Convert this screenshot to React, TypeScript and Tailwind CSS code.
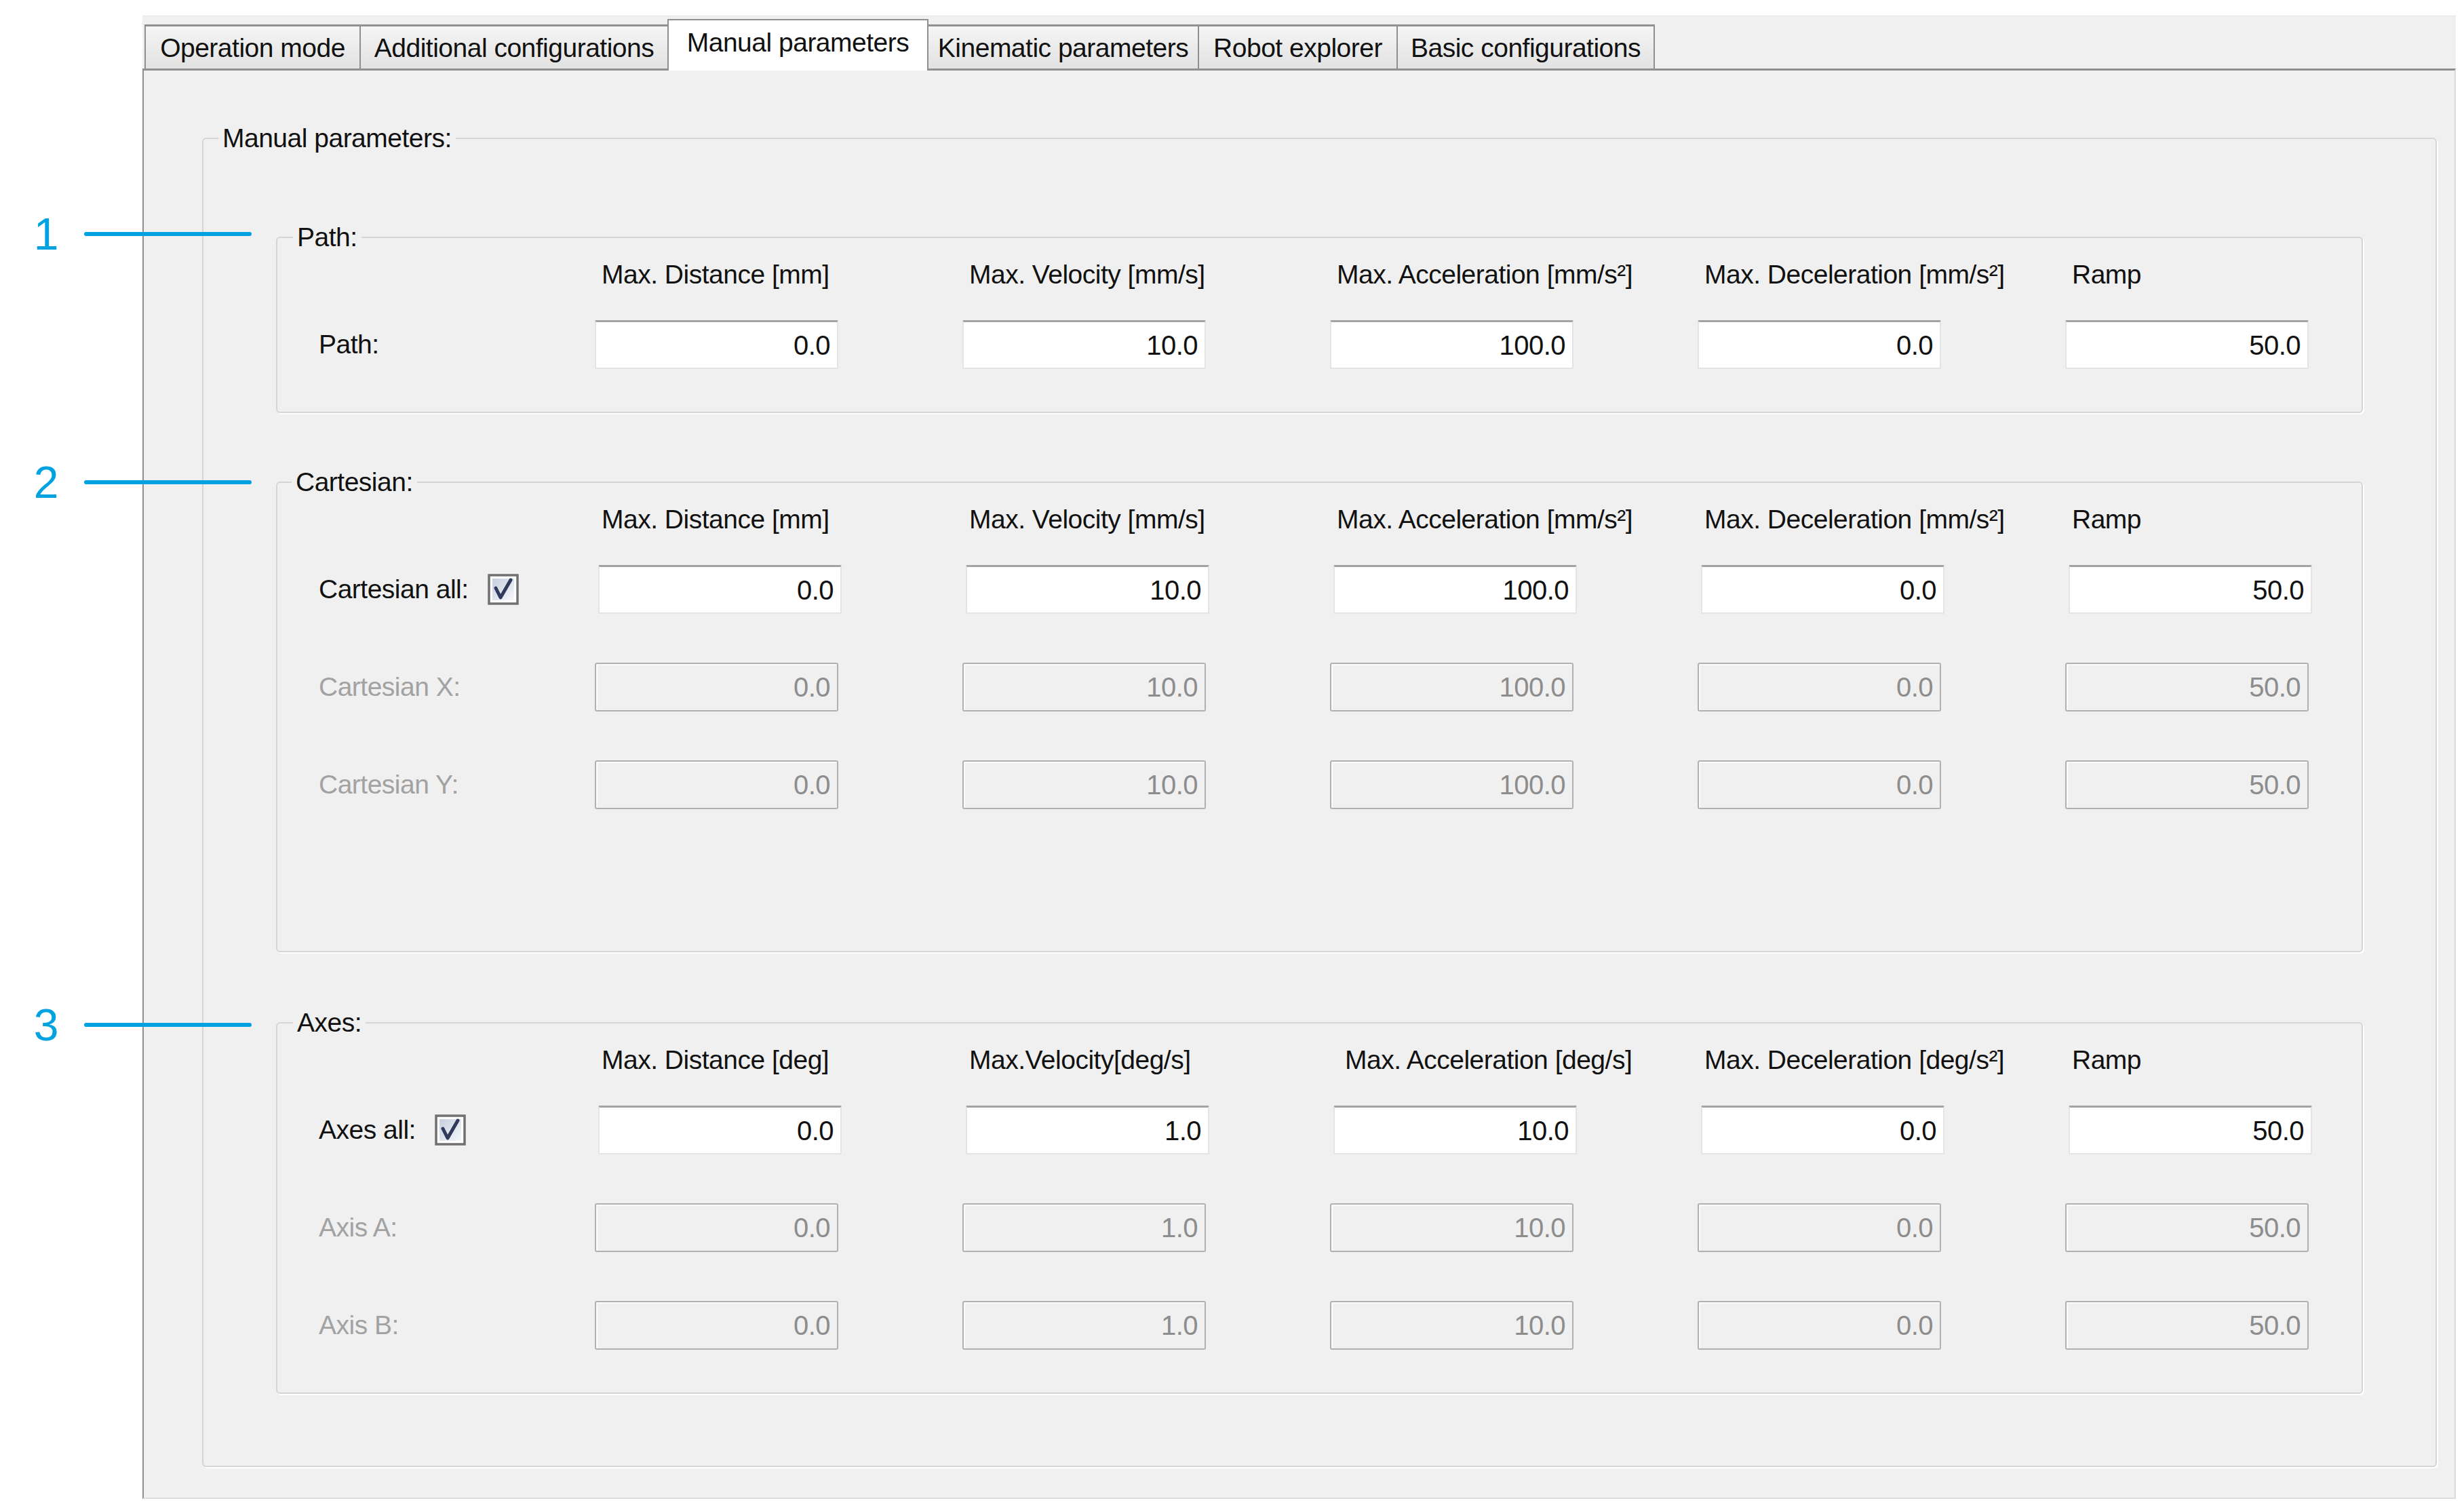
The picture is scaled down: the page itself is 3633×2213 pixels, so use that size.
import React from "react";

const FONT = "font-['Liberation_Sans',Arial,sans-serif]";

function Input({ value, disabled }: { value: string; disabled?: boolean }) {
  if (disabled) {
    return (
      <div className="w-[359px] h-[72px] shrink-0 flex items-center justify-end pr-[10px] bg-[#f0f0f0] border-2 border-[#b1b1b1] rounded-[3px] shadow-[inset_2px_2px_0_#fbfbfb] text-[40px] text-[#8d8d8d]">
        {value}
      </div>
    );
  }
  return (
    <div className="w-[359px] h-[72px] shrink-0 flex items-center justify-end pr-[10px] bg-white border-2 border-[#e4e4e4] border-t-[3px] border-t-[#a3a3a3] rounded-[2px] text-[40px] text-[#111]">
      {value}
    </div>
  );
}

function Checkbox({ id }: { id: string }) {
  return (
    <svg width="46" height="46" viewBox="0 0 46 46" className="ml-[28px] shrink-0">
      <defs>
        <linearGradient id={id} x1="0" y1="0" x2="1" y2="1">
          <stop offset="0" stopColor="#c6cfdd" />
          <stop offset="1" stopColor="#f5f7fb" />
        </linearGradient>
      </defs>
      <rect x="2" y="2" width="42" height="42" fill="#ffffff" stroke="#707070" strokeWidth="3.5" />
      <rect x="7" y="7" width="32" height="32" fill={`url(#${id})`} />
      <path d="M12 21 L19 35 L34 9" fill="none" stroke="#2f3a5c" strokeWidth="5" strokeLinejoin="round" strokeLinecap="round" />
    </svg>
  );
}

function Group({ title, legendClass, children }: { title: string; legendClass: string; children: React.ReactNode }) {
  return (
    <fieldset className="m-0 p-0 min-w-0 border-2 border-[#d5d5d5] rounded-[6px] shadow-[2px_2px_0_#ffffff]">
      <legend className={"px-[6px] text-[39px] leading-[46px] text-[#111] " + legendClass}>{title}</legend>
      {children}
    </fieldset>
  );
}

type Header = { t: string; wide?: boolean };

function HeaderRow({ headers }: { headers: Header[] }) {
  return (
    <div className="flex h-[46px] items-center whitespace-nowrap">
      <div className="w-[407px] shrink-0" />
      <div className="flex gap-[183px]">
        {headers.map((h, i) => (
          <div key={i} className={"w-[359px] shrink-0 " + (h.wide ? "pl-[22px]" : "pl-[10px]")}>
            {h.t}
          </div>
        ))}
      </div>
    </div>
  );
}

function Row({
  label,
  values,
  disabled,
  checkId,
}: {
  label: string;
  values: string[];
  disabled?: boolean;
  checkId?: string;
}) {
  return (
    <div className="flex h-[72px] items-center whitespace-nowrap">
      <div className={"w-[407px] shrink-0 flex items-center " + (disabled ? "text-[#a2a2a2]" : "text-[#111]")}>
        <span>{label}</span>
        {checkId ? <Checkbox id={checkId} /> : null}
      </div>
      <div className={"flex gap-[183px] " + (checkId ? "ml-[5px]" : "")}>
        {values.map((v, i) => (
          <Input key={i} value={v} disabled={disabled} />
        ))}
      </div>
    </div>
  );
}

function Callout({ n, top }: { n: string; top: string }) {
  return (
    <div className={"absolute left-[45px] z-20 flex items-center h-[66px] " + top}>
      <span className="w-[46px] text-center text-[66px] leading-none tracking-normal text-[#00a3e0]">{n}</span>
      <span className="ml-[33px] w-[247px] h-[6px] rounded-full bg-[#00a3e0]" />
    </div>
  );
}

const mmHeaders: Header[] = [
  { t: "Max. Distance [mm]" },
  { t: "Max. Velocity [mm/s]" },
  { t: "Max. Acceleration [mm/s²]" },
  { t: "Max. Deceleration [mm/s²]" },
  { t: "Ramp" },
];

const degHeaders: Header[] = [
  { t: "Max. Distance [deg]" },
  { t: "Max.Velocity[deg/s]" },
  { t: "Max. Acceleration [deg/s]", wide: true },
  { t: "Max. Deceleration [deg/s²]" },
  { t: "Ramp" },
];

const mmVals = ["0.0", "10.0", "100.0", "0.0", "50.0"];
const degVals = ["0.0", "1.0", "10.0", "0.0", "50.0"];

const tabs = [
  { t: "Operation mode", w: "w-[319px]" },
  { t: "Additional configurations", w: "w-[456px]" },
  { t: "Manual parameters", w: "w-[385px]", active: true },
  { t: "Kinematic parameters", w: "w-[401px]" },
  { t: "Robot explorer", w: "w-[295px]" },
  { t: "Basic configurations", w: "w-[381px]" },
];

export default function App() {
  return (
    <div className={"relative w-[3633px] h-[2213px] overflow-hidden bg-white text-[39px] tracking-[-0.5px] text-[#111] " + FONT}>
      <div className="ml-[210px] mr-[12px] pt-[23px] pb-[3px] h-full flex flex-col">
        <div className="flex-1 flex flex-col bg-[#f0f0f0] border-t border-[#e4e4e4]">
          {/* tab strip */}
          <div className="h-[77px] shrink-0 flex items-end pl-[3px] whitespace-nowrap">
            {tabs.map((tab, i) =>
              tab.active ? (
                <div
                  key={i}
                  className={"relative z-10 -ml-[2px] -mb-[3px] h-[76px] flex items-center justify-center pb-[8px] bg-white border-2 border-b-0 border-[#8f8f8f] " + tab.w}
                >
                  {tab.t}
                </div>
              ) : (
                <div
                  key={i}
                  className={
                    "h-[65px] flex items-center justify-center pt-[3px] bg-linear-to-b from-[#f5f5f5] to-[#e2e2e2] border-2 border-t-[3px] border-b-0 border-[#8f8f8f] " +
                    tab.w +
                    (i > 0 ? " -ml-[2px]" : "")
                  }
                >
                  {tab.t}
                </div>
              )
            )}
          </div>

          {/* panel */}
          <div className="flex-1 border-l-2 border-t-[3px] border-[#8f8f8f] border-r-2 border-r-[#d9d9d9] border-b-2 border-b-[#dcdcdc] pl-[86px] pr-[26px] pt-[77px]">
            <Group title="Manual parameters:" legendClass="ml-[22px]">
              <div className="px-[107px] pt-[100px] pb-[106px] flex flex-col">
                <Group title="Path:" legendClass="ml-[23px]">
                  <div className="pl-[61px] pt-[9px] pb-[63px] flex flex-col gap-[44px]">
                    <HeaderRow headers={mmHeaders} />
                    <Row label="Path:" values={mmVals} />
                  </div>
                </Group>

                <div className="mt-[79px]">
                  <Group title="Cartesian:" legendClass="ml-[21px]">
                    <div className="pl-[61px] pt-[9px] pb-[209px] flex flex-col">
                      <HeaderRow headers={mmHeaders} />
                      <div className="mt-[44px] flex flex-col gap-[72px]">
                        <Row label="Cartesian all:" values={mmVals} checkId="cbCart" />
                        <Row label="Cartesian X:" values={mmVals} disabled />
                        <Row label="Cartesian Y:" values={mmVals} disabled />
                      </div>
                    </div>
                  </Group>
                </div>

                <div className="mt-[81px]">
                  <Group title="Axes:" legendClass="ml-[23px]">
                    <div className="pl-[61px] pt-[9px] pb-[63px] flex flex-col">
                      <HeaderRow headers={degHeaders} />
                      <div className="mt-[44px] flex flex-col gap-[72px]">
                        <Row label="Axes all:" values={degVals} checkId="cbAxes" />
                        <Row label="Axis A:" values={degVals} disabled />
                        <Row label="Axis B:" values={degVals} disabled />
                      </div>
                    </div>
                  </Group>
                </div>
              </div>
            </Group>
          </div>
        </div>
      </div>

      <Callout n="1" top="top-[312px]" />
      <Callout n="2" top="top-[678px]" />
      <Callout n="3" top="top-[1478px]" />
    </div>
  );
}
